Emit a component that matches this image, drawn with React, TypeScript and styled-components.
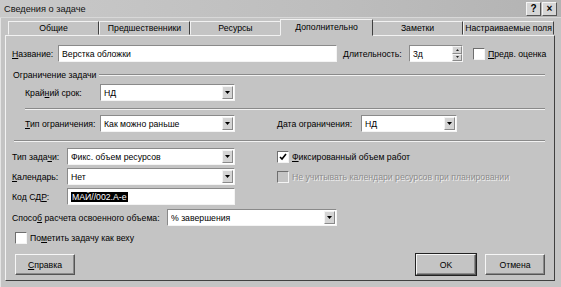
import styled, { createGlobalStyle, css } from "styled-components";

const GlobalStyle = createGlobalStyle`
  html, body { margin: 0; padding: 0; background: #c4c4c4; }
  body { font-family: "Liberation Sans", Arial, sans-serif; font-size: 8.7px; color: #000; }
`;

const Window = styled.div`
  width: 561px;
  height: 287px;
  background: #c4c4c4;
  box-sizing: border-box;
  display: flex;
  flex-direction: column;
`;

const TitleBar = styled.div`
  height: 17px;
  display: flex;
  align-items: center;
  justify-content: space-between;
  padding: 0 4px 0 4px;
  background: linear-gradient(to right, #c9c9c9, #bdbdbd 60%, #b3b3b3);
  border-bottom: 1px solid #d8d8d8;
`;

const TitleText = styled.span`
  font-size: 9.2px;
  color: #111;
`;

const TitleButtons = styled.div`
  display: flex;
  gap: 1px;
`;

const TitleButton = styled.div`
  width: 13px;
  height: 12px;
  background: #d6d6d6;
  border: 1px solid;
  border-color: #f4f4f4 #555 #555 #f4f4f4;
  font-weight: bold;
  font-size: 10px;
  line-height: 12px;
  text-align: center;
`;

const Body = styled.div`
  flex: 1;
  display: flex;
  flex-direction: column;
  padding: 0 6px 6px 4px;
  border-left: 1px solid #e4e4e4;
`;

const TabStrip = styled.div`
  display: flex;
  height: 17px;
  padding-left: 3px;
  align-items: flex-end;
`;

const Tab = styled.div<{ $active?: boolean }>`
  width: 91px;
  height: 14px;
  box-sizing: border-box;
  border: 1px solid;
  border-color: #f2f2f2 #404040 transparent #f2f2f2;
  text-align: center;
  line-height: 13px;
  white-space: nowrap;
  ${(p) =>
    p.$active &&
    css`
      height: 17px;
      line-height: 15px;
      margin: 0 -1px -1px -1px;
      width: 93px;
      background: #c4c4c4;
      position: relative;
      z-index: 1;
    `}
`;

const Panel = styled.div`
  flex: 1;
  display: flex;
  flex-direction: column;
  border: 1px solid;
  border-color: #f2f2f2 #404040 #404040 #f2f2f2;
  padding: 9px 9px 0 6px;
`;

const Row = styled.div<{ $mt?: number; $indent?: number }>`
  display: flex;
  align-items: center;
  height: 17px;
  margin-top: ${(p) => p.$mt ?? 0}px;
  padding-left: ${(p) => p.$indent ?? 0}px;
`;

const Label = styled.span<{ $w?: number; $ml?: number; $disabled?: boolean }>`
  width: ${(p) => (p.$w ? `${p.$w}px` : "auto")};
  margin-left: ${(p) => p.$ml ?? 0}px;
  flex-shrink: 0;
  white-space: nowrap;
  color: ${(p) => (p.$disabled ? "#8c8c8c" : "#000")};
  ${(p) =>
    p.$disabled &&
    css`
      text-shadow: 1px 1px 0 #f0f0f0;
    `}
`;

const Field = styled.div<{ $w: number }>`
  width: ${(p) => p.$w}px;
  height: 17px;
  box-sizing: border-box;
  background: #fff;
  border: 1px solid;
  border-color: #8a8a8a #f4f4f4 #f4f4f4 #8a8a8a;
  display: flex;
  align-items: center;
  padding-left: 3px;
  flex-shrink: 0;
`;

const FieldText = styled.span`
  flex: 1;
  white-space: nowrap;
  overflow: hidden;
`;

const Selected = styled.span`
  background: #000;
  color: #fff;
  padding: 1px 1px;
`;

const DropButton = styled.div`
  width: 11px;
  height: 13px;
  margin-right: 1px;
  background: #d4d4d4;
  border: 1px solid;
  border-color: #f4f4f4 #8a8a8a #8a8a8a #f4f4f4;
  box-sizing: border-box;
  display: flex;
  align-items: center;
  justify-content: center;
`;

const SpinBox = styled.div`
  width: 10px;
  height: 15px;
  display: flex;
  flex-direction: column;
`;

const SpinHalf = styled.div`
  flex: 1;
  background: #d4d4d4;
  border: 1px solid;
  border-color: #f4f4f4 #8a8a8a #8a8a8a #f4f4f4;
  box-sizing: border-box;
  display: flex;
  align-items: center;
  justify-content: center;
`;

const Check = styled.div<{ $disabled?: boolean }>`
  width: 12px;
  height: 12px;
  box-sizing: border-box;
  border: 1px solid;
  border-color: #6e6e6e #f4f4f4 #f4f4f4 #6e6e6e;
  background: ${(p) => (p.$disabled ? "#c4c4c4" : "#fff")};
  margin-right: 3px;
  flex-shrink: 0;
  display: flex;
  align-items: center;
  justify-content: center;
`;

const CheckRow = styled.div<{ $ml?: number }>`
  display: flex;
  align-items: center;
  margin-left: ${(p) => p.$ml ?? 0}px;
`;

const GroupHeader = styled.div<{ $mt?: number }>`
  display: flex;
  align-items: center;
  margin-top: ${(p) => p.$mt ?? 0}px;
  height: 13px;
  padding-left: 1px;
`;

const Etched = styled.div<{ $ml?: number; $mt?: number }>`
  flex: 1;
  height: 0;
  border-top: 1px solid #8a8a8a;
  border-bottom: 1px solid #f2f2f2;
  margin-left: ${(p) => p.$ml ?? 0}px;
  margin-top: ${(p) => p.$mt ?? 0}px;
`;

const Separator = styled(Etched)`
  flex: none;
`;

const ButtonRow = styled.div`
  display: flex;
  align-items: center;
  margin-top: 8px;
  padding-left: 3px;
`;

const Spacer = styled.div`
  flex: 1;
`;

const Button = styled.div<{ $default?: boolean; $ml?: number }>`
  width: 60px;
  height: 21px;
  box-sizing: border-box;
  margin-left: ${(p) => p.$ml ?? 0}px;
  border: 1px solid;
  border-color: #f6f6f6 #555 #555 #f6f6f6;
  box-shadow: inset -1px -1px 0 #8a8a8a;
  display: flex;
  align-items: center;
  justify-content: center;
  ${(p) =>
    p.$default &&
    css`
      outline: 1px solid #222;
    `}
`;

const U = styled.u`
  text-decoration: underline;
`;

const DownArrow = () => (
  <svg width="5" height="3" viewBox="0 0 5 3">
    <path d="M0 0h5L2.5 3z" fill="#000" />
  </svg>
);

const UpArrow = () => (
  <svg width="3" height="2" viewBox="0 0 3 2">
    <path d="M0 2h3L1.5 0z" fill="#222" />
  </svg>
);

const SmallDown = () => (
  <svg width="3" height="2" viewBox="0 0 3 2">
    <path d="M0 0h3L1.5 2z" fill="#222" />
  </svg>
);

const Tick = () => (
  <svg width="8" height="8" viewBox="0 0 8 8">
    <path d="M1 4l2 2 4-5" stroke="#000" strokeWidth="1.6" fill="none" />
  </svg>
);

const Select = ({ w, value }: { w: number; value: string }) => (
  <Field $w={w}>
    <FieldText>{value}</FieldText>
    <DropButton>
      <DownArrow />
    </DropButton>
  </Field>
);

export default function App() {
  return (
    <>
      <GlobalStyle />
      <Window>
        <TitleBar>
          <TitleText>Сведения о задаче</TitleText>
          <TitleButtons>
            <TitleButton>?</TitleButton>
            <TitleButton>×</TitleButton>
          </TitleButtons>
        </TitleBar>
        <Body>
          <TabStrip>
            <Tab>Общие</Tab>
            <Tab>Предшественники</Tab>
            <Tab>Ресурсы</Tab>
            <Tab $active>Дополнительно</Tab>
            <Tab>Заметки</Tab>
            <Tab>Настраиваемые поля</Tab>
          </TabStrip>
          <Panel>
            <Row>
              <Label $w={46}>
                <U>Н</U>азвание:
              </Label>
              <Field $w={279}>
                <FieldText>Верстка обложки</FieldText>
              </Field>
              <Label $w={66} $ml={6}>
                <U>Д</U>лительность:
              </Label>
              <Field $w={54}>
                <FieldText>3д</FieldText>
                <SpinBox>
                  <SpinHalf>
                    <UpArrow />
                  </SpinHalf>
                  <SpinHalf>
                    <SmallDown />
                  </SpinHalf>
                </SpinBox>
              </Field>
              <CheckRow $ml={10}>
                <Check />
                <Label>
                  <U>П</U>редв. оценка
                </Label>
              </CheckRow>
            </Row>

            <GroupHeader $mt={6}>
              <Label>Ограничение задачи</Label>
              <Etched $ml={3} />
            </GroupHeader>
            <Row $mt={3} $indent={13}>
              <Label $w={75}>
                Край<U>н</U>ий срок:
              </Label>
              <Select w={135} value="НД" />
            </Row>
            <Separator $ml={13} $mt={7} />
            <Row $mt={5} $indent={13}>
              <Label $w={75}>
                <U>Т</U>ип ограничения:
              </Label>
              <Select w={135} value="Как можно раньше" />
              <Label $w={84} $ml={42}>
                Дата ограничения:
              </Label>
              <Select w={96} value="НД" />
            </Row>
            <Separator $ml={2} $mt={8} />

            <Row $mt={6}>
              <Label $w={55}>
                Тип зада<U>ч</U>и:
              </Label>
              <Select w={168} value="Фикс. объем ресурсов" />
              <CheckRow $ml={42}>
                <Check>
                  <Tick />
                </Check>
                <Label>
                  <U>Ф</U>иксированный объем работ
                </Label>
              </CheckRow>
            </Row>
            <Row $mt={3}>
              <Label $w={55}>
                <U>К</U>алендарь:
              </Label>
              <Select w={168} value="Нет" />
              <CheckRow $ml={42}>
                <Check $disabled />
                <Label $disabled>Не учитывать календари ресурсов при планировании</Label>
              </CheckRow>
            </Row>
            <Row $mt={3}>
              <Label $w={55}>
                Код СД<U>Р</U>:
              </Label>
              <Field $w={168}>
                <FieldText>
                  <Selected>МАЙ//002.А-е</Selected>
                </FieldText>
              </Field>
            </Row>
            <Row $mt={4}>
              <Label $w={155}>
                Спосо<U>б</U> расчета освоенного объема:
              </Label>
              <Select w={170} value="% завершения" />
            </Row>
            <Row $mt={3}>
              <CheckRow $ml={3}>
                <Check />
                <Label>
                  По<U>м</U>етить задачу как веху
                </Label>
              </CheckRow>
            </Row>

            <ButtonRow>
              <Button>
                <U>С</U>правка
              </Button>
              <Spacer />
              <Button $default>OK</Button>
              <Button $ml={9}>Отмена</Button>
            </ButtonRow>
          </Panel>
        </Body>
      </Window>
    </>
  );
}
